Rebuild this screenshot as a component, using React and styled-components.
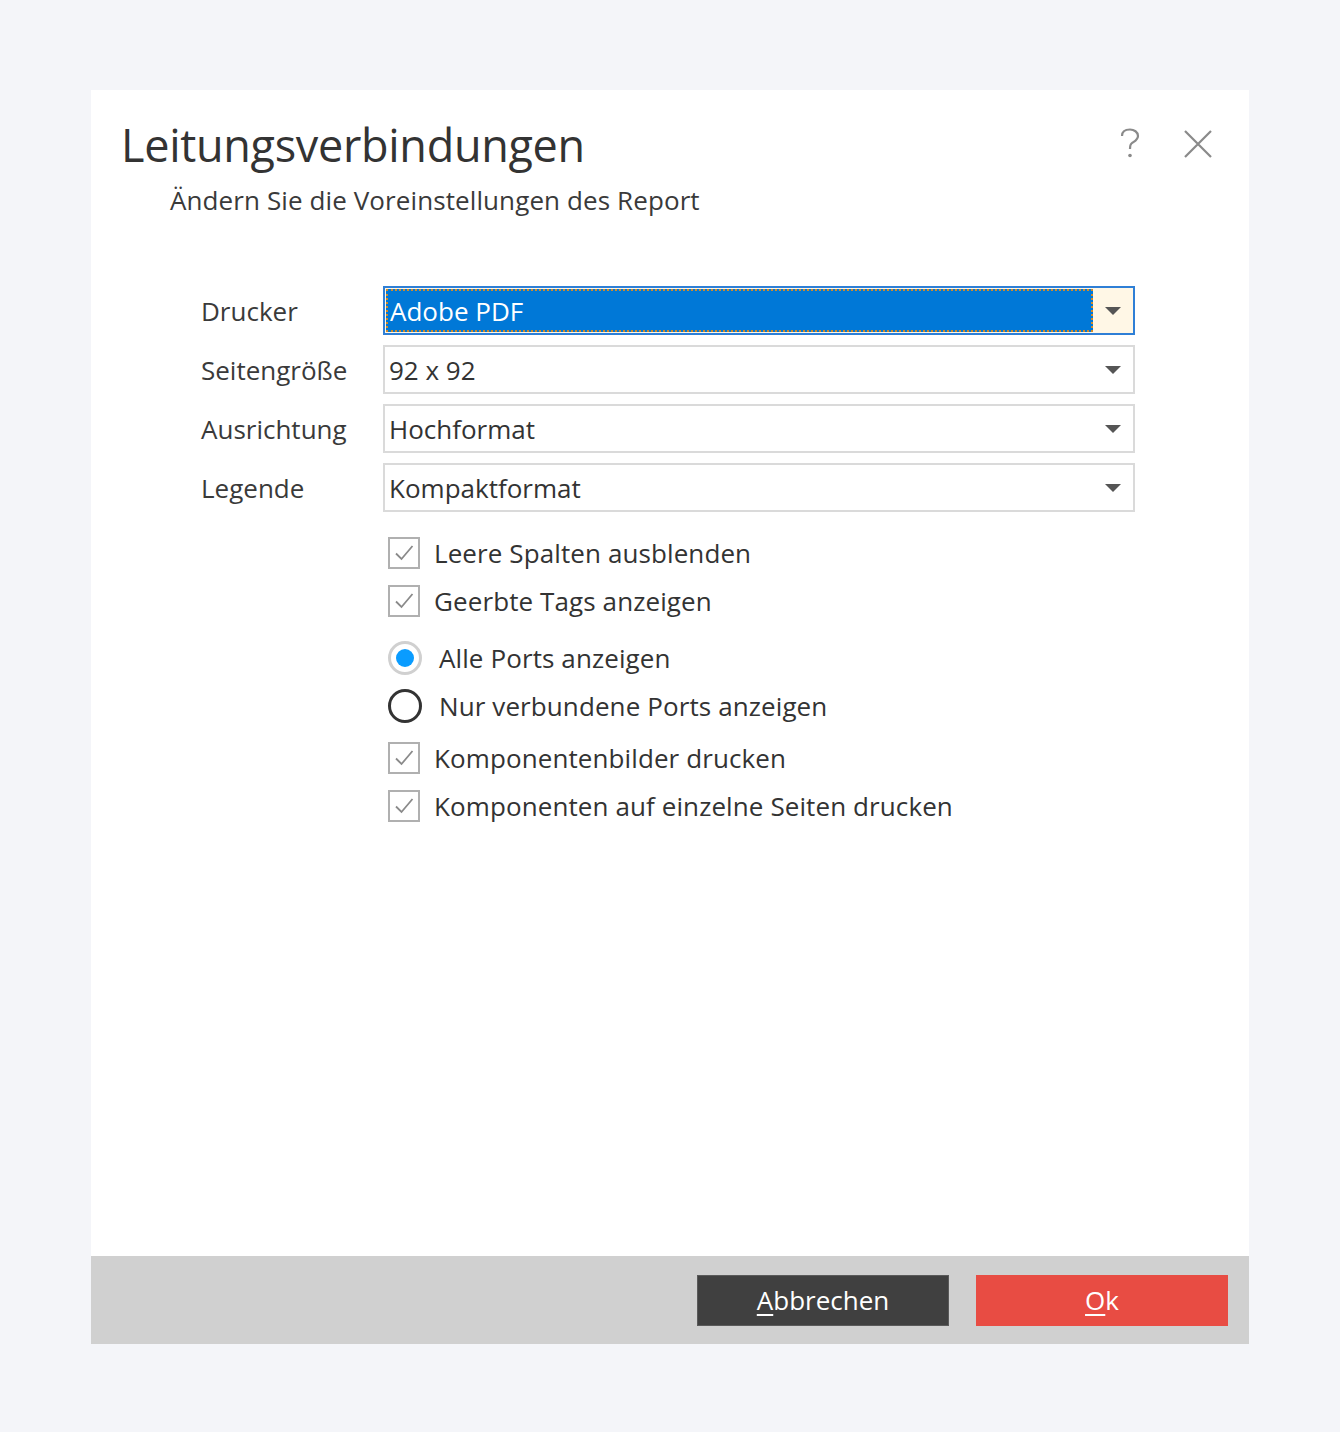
import React from "react";
import styled, { createGlobalStyle } from "styled-components";

const GlobalStyle = createGlobalStyle`
  html, body {
    margin: 0;
    padding: 0;
    background: #f4f5f9;
    font-family: "Open Sans", "Noto Sans", sans-serif;
  }
`;

const Page = styled.div`
  padding: 90px 0 0 91px;
  min-height: 1432px;
  box-sizing: border-box;
`;

const Dialog = styled.div`
  width: 1158px;
  height: 1254px;
  background: #ffffff;
  display: flex;
  flex-direction: column;
`;

const Header = styled.div`
  display: flex;
  justify-content: space-between;
  padding: 26px 36px 0 30px;
`;

const Title = styled.h1`
  margin: 0;
  font-size: 45px;
  font-weight: 400;
  color: #333333;
  line-height: 58px;
  letter-spacing: -0.3px;
`;

const Subtitle = styled.div`
  margin: 8px 0 0 49px;
  font-size: 26px;
  color: #3a3a3a;
  letter-spacing: 0.1px;
`;

const HeaderIcons = styled.div`
  display: flex;
  gap: 38px;
  padding-top: 10px;
  color: #8a8a8a;
`;

const IconButton = styled.span`
  display: flex;
  align-items: center;
  justify-content: center;
  width: 30px;
  height: 36px;
`;

const Body = styled.div`
  flex: 1;
  padding: 68px 0 0 110px;
`;

const FormGrid = styled.div`
  display: grid;
  grid-template-columns: 182px 752px;
  row-gap: 10px;
  align-items: center;
`;

const Label = styled.div`
  font-size: 26px;
  color: #3a3a3a;
  letter-spacing: 0;
`;

const Select = styled.div`
  height: 49px;
  box-sizing: border-box;
  border: 2px solid ${(p) => (p.focused ? "#2f7fd6" : "#dadada")};
  display: flex;
  align-items: stretch;
  background: ${(p) => (p.focused ? "#fff7e6" : "#ffffff")};
`;

const SelectValue = styled.div`
  flex: 1;
  display: flex;
  align-items: center;
  padding-left: 4px;
  font-size: 26px;
  letter-spacing: 0;
  color: ${(p) => (p.focused ? "#ffffff" : "#333333")};
  background: ${(p) => (p.focused ? "#0078d7" : "transparent")};
  outline: ${(p) => (p.focused ? "2px dotted #d08a2a" : "none")};
  outline-offset: -2px;
  margin: ${(p) => (p.focused ? "1px 0 1px 1px" : "0")};
`;

const Arrow = styled.div`
  width: 40px;
  display: flex;
  align-items: center;
  justify-content: center;
  &::after {
    content: "";
    border-left: 8px solid transparent;
    border-right: 8px solid transparent;
    border-top: 8px solid #555555;
  }
`;

const Options = styled.div`
  grid-column: 2;
  padding: 7px 0 0 5px;
  display: flex;
  flex-direction: column;
`;

const OptionRow = styled.label`
  display: flex;
  align-items: center;
  height: 48px;
  margin-top: ${(p) => p.$space || 0}px;
  font-size: 26px;
  color: #333333;
  letter-spacing: 0.1px;
`;

const Box = styled.span`
  width: 32px;
  height: 32px;
  box-sizing: border-box;
  border: 2px solid #b0b0b0;
  display: flex;
  align-items: center;
  justify-content: center;
  margin-right: 14px;
`;

const Radio = styled.span`
  width: 34px;
  height: 34px;
  box-sizing: border-box;
  border-radius: 50%;
  border: 3px solid ${(p) => (p.checked ? "#d0d0d0" : "#333333")};
  display: flex;
  align-items: center;
  justify-content: center;
  margin-right: 17px;
  &::after {
    content: "";
    width: 18px;
    height: 18px;
    border-radius: 50%;
    background: ${(p) => (p.checked ? "#0a9cff" : "transparent")};
  }
`;

const Footer = styled.div`
  height: 88px;
  background: #d0d0d0;
  display: flex;
  justify-content: flex-end;
  align-items: center;
  gap: 27px;
  padding-right: 21px;
`;

const Button = styled.button`
  width: 252px;
  height: 51px;
  border: 1px solid ${(p) => (p.primary ? "#e84c43" : "#5a5a5a")};
  background: ${(p) => (p.primary ? "#e84c43" : "#404040")};
  color: #ffffff;
  font-family: "Open Sans", "Noto Sans", sans-serif;
  font-size: 26px;
  letter-spacing: 0;
  padding: 0;
  u {
    text-underline-offset: 4px;
    text-decoration-thickness: 2px;
  }
`;

function Check() {
  return (
    <svg width="24" height="24" viewBox="0 0 24 24">
      <path d="M4 12.5 L9.5 18 L20.5 5" fill="none" stroke="#8a8a8a" strokeWidth="1.8" />
    </svg>
  );
}

const selects = [
  { label: "Drucker", value: "Adobe PDF", focused: true },
  { label: "Seitengröße", value: "92 x 92" },
  { label: "Ausrichtung", value: "Hochformat" },
  { label: "Legende", value: "Kompaktformat" },
];

export default function App() {
  return (
    <Page>
      <GlobalStyle />
      <Dialog>
        <Header>
          <div>
            <Title>Leitungsverbindungen</Title>
            <Subtitle>Ändern Sie die Voreinstellungen des Report</Subtitle>
          </div>
          <HeaderIcons>
            <IconButton>
              <svg width="22" height="32" viewBox="0 0 22 32">
                <path d="M3 8 C3 3 7 1.5 11 1.5 C15 1.5 19 4 19 8 C19 12 15 13.5 12.5 15.5 C11 16.7 11 18 11 21" fill="none" stroke="#8a8a8a" strokeWidth="2.2" />
                <circle cx="11" cy="27.5" r="1.8" fill="#8a8a8a" />
              </svg>
            </IconButton>
            <IconButton>
              <svg width="30" height="30" viewBox="0 0 30 30">
                <path d="M2 2 L28 28 M28 2 L2 28" stroke="#8a8a8a" strokeWidth="2.2" />
              </svg>
            </IconButton>
          </HeaderIcons>
        </Header>
        <Body>
          <FormGrid>
            {selects.map((s) => (
              <React.Fragment key={s.label}>
                <Label>{s.label}</Label>
                <Select focused={s.focused}>
                  <SelectValue focused={s.focused}>{s.value}</SelectValue>
                  <Arrow />
                </Select>
              </React.Fragment>
            ))}
            <Options>
              <OptionRow>
                <Box><Check /></Box>Leere Spalten ausblenden
              </OptionRow>
              <OptionRow>
                <Box><Check /></Box>Geerbte Tags anzeigen
              </OptionRow>
              <OptionRow $space={9}>
                <Radio checked />Alle Ports anzeigen
              </OptionRow>
              <OptionRow>
                <Radio />Nur verbundene Ports anzeigen
              </OptionRow>
              <OptionRow $space={4}>
                <Box><Check /></Box>Komponentenbilder drucken
              </OptionRow>
              <OptionRow>
                <Box><Check /></Box>Komponenten auf einzelne Seiten drucken
              </OptionRow>
            </Options>
          </FormGrid>
        </Body>
        <Footer>
          <Button><u>A</u>bbrechen</Button>
          <Button primary><u>O</u>k</Button>
        </Footer>
      </Dialog>
    </Page>
  );
}
